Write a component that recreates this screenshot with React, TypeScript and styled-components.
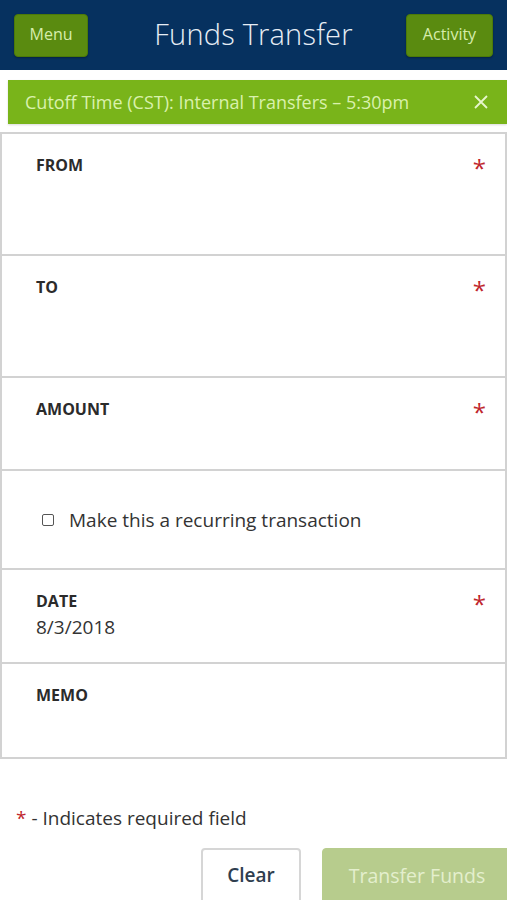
import styled, { createGlobalStyle } from "styled-components";

const GlobalStyle = createGlobalStyle`
  body {
    margin: 0;
    background: #ffffff;
    font-family: "Open Sans", "Liberation Sans", sans-serif;
    color: #333333;
    overflow-x: hidden;
  }
`;

const Header = styled.header`
  height: 70px;
  background: #06315f;
  display: grid;
  grid-template-columns: 1fr auto 1fr;
  align-items: center;
  padding: 0 14px;
  box-sizing: border-box;
`;

const HeaderButton = styled.button<{ $w: number; $end?: boolean }>`
  height: 43px;
  width: ${(p) => p.$w}px;
  justify-self: ${(p) => (p.$end ? "end" : "start")};
  padding: 0 0 2px;
  background: #5a8b10;
  border: 1px solid #4c7a08;
  border-radius: 4px;
  color: #d6edac;
  font-family: "Open Sans", sans-serif;
  font-size: 16px;
  box-shadow: 0 1px 2px rgba(0, 0, 0, 0.3);
`;

const Title = styled.h1`
  margin: 0 0 4px;
  font-size: 29px;
  font-weight: 300;
  color: #e6edf5;
  letter-spacing: 0.2px;
`;

const Banner = styled.div`
  margin: 10px 0 8px 8px;
  height: 44px;
  background: #79b41a;
  display: flex;
  align-items: center;
  justify-content: space-between;
  padding: 0 19px 0 17px;
  color: #d9f1ad;
  font-size: 18px;
  box-shadow: 0 1px 2px rgba(0, 0, 0, 0.15);
`;

const CloseIcon = () => (
  <svg width="14" height="14" viewBox="0 0 14 14">
    <path d="M1 1 L13 13 M13 1 L1 13" stroke="#e7f6cc" strokeWidth="1.8" fill="none" />
  </svg>
);

const Form = styled.div`
  border-left: 2px solid #d2d2d2;
  border-right: 2px solid #d2d2d2;
  border-bottom: 2px solid #d2d2d2;
`;

const Row = styled.div<{ $h: number; $center?: boolean }>`
  height: ${(p) => p.$h}px;
  box-sizing: border-box;
  border-top: 2px solid #d2d2d2;
  padding: ${(p) => (p.$center ? "0 20px 0 40px" : "20px 19px 0 34px")};
  display: flex;
  flex-direction: column;
  justify-content: ${(p) => (p.$center ? "center" : "flex-start")};
`;

const LabelLine = styled.div`
  display: flex;
  justify-content: space-between;
  align-items: flex-start;
`;

const Label = styled.span`
  font-size: 16px;
  font-weight: 700;
  color: #2b2b2b;
  line-height: 22px;
`;

const Req = styled.span`
  color: #c0262c;
  font-size: 24px;
  line-height: 22px;
  height: 22px;
  padding-top: 3px;
`;

const Value = styled.div`
  font-size: 19px;
  color: #333333;
  line-height: 24px;
`;

const CheckLine = styled.label`
  display: flex;
  align-items: center;
  gap: 15px;
  font-size: 19px;
  color: #333333;
`;

const Box = styled.span`
  width: 10px;
  height: 10px;
  border: 1.5px solid #555555;
  border-radius: 2px;
`;

const Note = styled.p`
  margin: 47px 0 0 16px;
  font-size: 19px;
  color: #333333;
  line-height: 24px;
`;

const NoteStar = styled.span`
  color: #c0262c;
`;

const Actions = styled.div`
  display: flex;
  justify-content: flex-end;
  gap: 21px;
  margin-top: 18px;
  margin-right: -5px;
`;

const ActionButton = styled.button<{ $primary?: boolean }>`
  height: 62px;
  padding: 0 0 8px;
  border-radius: 4px;
  font-family: "Open Sans", sans-serif;
  font-size: ${(p) => (p.$primary ? 19.5 : 19)}px;
  font-weight: ${(p) => (p.$primary ? 400 : 600)};
  background: ${(p) => (p.$primary ? "#b7cc8d" : "#ffffff")};
  color: ${(p) => (p.$primary ? "#e4efcd" : "#2f3e4f")};
  border: ${(p) => (p.$primary ? "1px solid #b7cc8d" : "2px solid #d6d6d6")};
  width: ${(p) => (p.$primary ? 190 : 100)}px;
`;

function Field({ label, required, h, value }: { label: string; required?: boolean; h: number; value?: string }) {
  return (
    <Row $h={h}>
      <LabelLine>
        <Label>{label}</Label>
        {required && <Req>*</Req>}
      </LabelLine>
      {value && <Value>{value}</Value>}
    </Row>
  );
}

export default function App() {
  return (
    <>
      <GlobalStyle />
      <Header>
        <HeaderButton $w={74}>Menu</HeaderButton>
        <Title>Funds Transfer</Title>
        <HeaderButton $w={87} $end>
          Activity
        </HeaderButton>
      </Header>
      <Banner>
        <span>Cutoff Time (CST): Internal Transfers – 5:30pm</span>
        <CloseIcon />
      </Banner>
      <Form>
        <Field label="FROM" required h={122} />
        <Field label="TO" required h={122} />
        <Field label="AMOUNT" required h={93} />
        <Row $h={99} $center>
          <CheckLine>
            <Box />
            Make this a recurring transaction
          </CheckLine>
        </Row>
        <Field label="DATE" required h={94} value="8/3/2018" />
        <Field label="MEMO" h={95} />
      </Form>
      <Note>
        <NoteStar>*</NoteStar> - Indicates required field
      </Note>
      <Actions>
        <ActionButton>Clear</ActionButton>
        <ActionButton $primary>Transfer Funds</ActionButton>
      </Actions>
    </>
  );
}
